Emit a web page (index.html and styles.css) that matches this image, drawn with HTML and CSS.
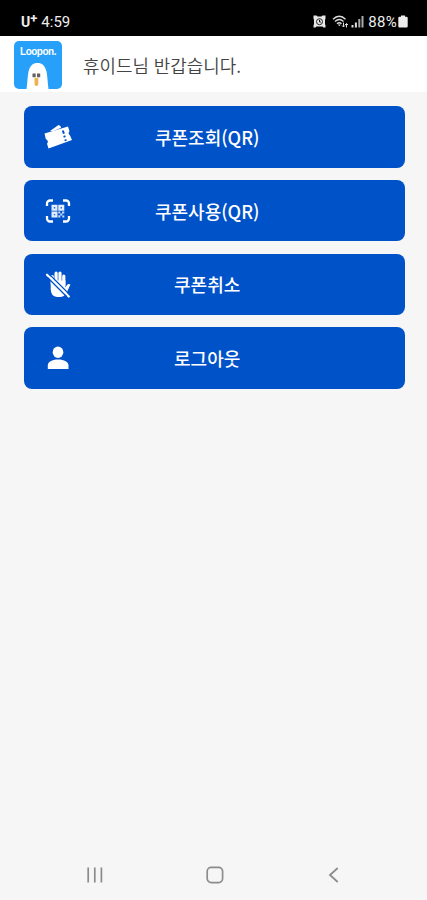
FILE: index.html
```html
<!DOCTYPE html>
<html lang="ko">
  <head>
    <meta charset="UTF-8" />
    <meta name="viewport" content="width=device-width, initial-scale=1.0" />
    <title>Loopon</title>
    <link rel="stylesheet" href="styles.css">
  </head>

  <body>
    <div class="status-bar">
      <div class="status-left">
        <span class="carrier">U<sup>+</sup></span>
        <span class="time">4:59</span>
      </div>
      <div class="status-right">
        <svg class="alarm" width="13" height="13" viewBox="0 0 13 13">
          <path d="M0.500 0.500h3l1 1h4l1-1h3v3l-0.500 1.500v4l0.500 1.500v2h-2l-1-1h-6l-1 1h-2v-2l0.500-1.500v-4l-0.500-1.500z" fill="#e8e8e8" />
          <circle cx="6.500" cy="6.700" r="3" fill="none" stroke="#222" stroke-width="1" />
          <path d="M6.500 4.800v2.200h1.500" fill="none" stroke="#111" stroke-width="1" />
        </svg>
        <svg class="wifi" width="17" height="13" viewBox="0 0 17 13">
          <path d="M1 4.300c4-4 8.500-4 12.500 0M3 6.500c2.800-2.600 5.700-2.600 8.500 0M5 8.700c1.500-1.300 3-1.300 4.500 0" fill="none" stroke="#ddd" stroke-width="1.400" />
          <path d="M5.800 9.500h3l-1.500 1.800z" fill="#ddd" />
          <path d="M11.500 7.500v4.500M10 10.500l1.500 1.500 1.300-1.500M14.500 12.500v-4M13 10l1.500-1.500 1.500 1.500" fill="none" stroke="#ddd" stroke-width="1" />
        </svg>
        <svg class="signal" width="13" height="13" viewBox="0 0 13 13">
          <path d="M0.500 10h2v2.500h-2zM3.900 7.500h2v5h-2z" fill="#ddd" />
          <path d="M7.300 4h2v8.500h-2zM10.500 1h2v11.500h-2z" fill="#aaa" />
        </svg>
        <span class="percent">88%</span>
        <svg class="battery" width="10" height="13" viewBox="0 0 10 13">
          <path d="M3 0.500h4v1.300h1.500a1.200 1.200 0 0 1 1.200 1.200v8.300a1.200 1.200 0 0 1-1.200 1.200h-7a1.200 1.200 0 0 1-1.200-1.200v-8.300a1.200 1.200 0 0 1 1.200-1.200h1.500z" fill="#eee" />
        </svg>
      </div>
    </div>

    <header class="header">
      <div class="logo">
        <span class="logo-name">Loopon.</span>
        <svg class="logo-bird" width="24" height="27" viewBox="0 0 24 27">
          <path d="M0.500 27C1.500 20 1.500 14 2.500 9.500C4 3.500 7 1 11.500 1S19 3.500 20.500 9.500C21.500 14 21.500 20 22.500 27z" fill="#fff" />
          <path d="M6.500 11.500h3.200v3.800h-3.200zM11 11.500h3.200v3.800h-3.200z" fill="#66605e" />
          <path d="M8.500 16h3.800v6q0 2-1.900 2t-1.900-2z" fill="#efb24e" />
        </svg>
      </div>
      <p class="greeting">휴이드님 반갑습니다.</p>
    </header>

    <main class="menu">
      <button class="menu-btn">
        <svg class="menu-icon" width="28" height="28" viewBox="0 0 28 28">
          <path d="M6 8L14.500 2Q16.500 2 17.200 4.800L9 8.300z" fill="#fff" />
          <path d="M0.500 10.500L24 3.500L25.500 8.300Q23.500 10.300 26 12.500L28 17L4.500 25.500L3 20.800Q5.200 18.200 1.800 16z" fill="#fff" />
          <path d="M18.800 7.500l1.100 3.300M20.200 12.600l0.600 1.700M21.300 16.400l0.500 1.600" fill="none" stroke="#0052c9" stroke-width="2" />
        </svg>
        <span class="menu-label">쿠폰조회(QR)</span>
      </button>

      <button class="menu-btn">
        <svg class="menu-icon" width="28" height="28" viewBox="0 0 28 28">
          <path d="M3 9V6.500a3 3 0 0 1 3-3h3M19 3.500h3a3 3 0 0 1 3 3V9M25 19v2.500a3 3 0 0 1-3 3h-3M9 24.500H6a3 3 0 0 1-3-3V19" fill="none" stroke="#fff" stroke-width="2.300" />
          <path d="M7.500 7.800h6v6h-6zM14.300 7.800h6v6h-6zM7.500 14.600h6v6h-6z" fill="#e3ecff" />
          <path d="M14.300 14.600h2v2h-2zM18 14.600h2.300v2h-2.300zM16.300 16.600h2v2h-2zM14.300 18.300h2v2.300h-2zM18.300 18.500h2v2h-2z" fill="#c9dcfc" />
          <path d="M9.800 10.100h1.400v1.400h-1.400zM16.600 10.100h1.400v1.400h-1.400zM9.800 16.900h1.400v1.400h-1.400z" fill="#2969d2" />
        </svg>
        <span class="menu-label">쿠폰사용(QR)</span>
      </button>

      <button class="menu-btn">
        <svg class="menu-icon" width="28" height="28" viewBox="0 0 28 28">
          <path d="M8.300 14V6.500M12.100 14V3.200M16 14V3.200M19.800 15V6" fill="none" stroke="#fff" stroke-width="3.200" stroke-linecap="round" />
          <path d="M6.700 10.500h14.700v7l1.600-2.500q1.500-1.800 3.400-0.500L22.800 22.500Q20 27 16 27H13Q6.700 26 6.700 19z" fill="#fff" />
          <path d="M5.500 4.500L26.500 25.500" stroke="#0052c9" stroke-width="1.300" />
          <path d="M3 4.700L24.800 26.500" stroke="#fff" stroke-width="2.200" stroke-linecap="round" />
          <path d="M3.500 7.500L22.500 26.500" stroke="#0052c9" stroke-width="1.300" />
        </svg>
        <span class="menu-label">쿠폰취소</span>
      </button>

      <button class="menu-btn">
        <svg class="menu-icon" width="28" height="28" viewBox="0 0 28 28">
          <ellipse cx="14" cy="8.300" rx="5.300" ry="5.700" fill="#fff" />
          <path d="M3.800 25v-3.500c0-3.500 4-6 10.200-6s10.500 2.500 10.500 6V25z" fill="#fff" />
        </svg>
        <span class="menu-label">로그아웃</span>
      </button>
    </main>

    <nav class="nav-bar">
      <svg width="18" height="18" viewBox="0 0 18 18">
        <path d="M2.200 1.500v15M8.800 1.500v15M15.400 1.500v15" stroke="#8c8c8c" stroke-width="1.700" />
      </svg>
      <svg width="18" height="18" viewBox="0 0 18 18">
        <rect x="1.200" y="1.400" width="15.400" height="15.200" rx="4" fill="none" stroke="#8c8c8c" stroke-width="1.700" />
      </svg>
      <svg width="18" height="18" viewBox="0 0 18 18">
        <path d="M12.700 2L5 9l7.700 7" fill="none" stroke="#8c8c8c" stroke-width="1.800" />
      </svg>
    </nav>
  </body>
</html>
```

FILE: styles.css
```css
* {
  box-sizing: border-box;
}

body {
  margin: 0;
  height: 100vh;
  display: flex;
  flex-direction: column;
  background-color: #f6f6f6;
  font-family: "Noto Sans CJK KR", sans-serif;
}

.status-bar {
  height: 36px;
  padding: 7px 19px 0 21px;
  display: flex;
  justify-content: space-between;
  align-items: center;
  background-color: #000000;
  color: #eeeeee;
  font-family: Roboto, sans-serif;
  font-size: 15px;
}

.status-left,
.status-right {
  display: flex;
  align-items: center;
}

.carrier {
  font-size: 14px;
  font-weight: bold;
  line-height: 16px;
}

.carrier sup {
  font-size: 13px;
  line-height: 0;
  vertical-align: 4px;
}

.time {
  margin-left: 4px;
}

.wifi {
  margin-left: 6px;
}

.signal {
  margin-left: 2px;
}

.percent {
  margin-left: 4px;
  letter-spacing: 0.3px;
}

.battery {
  margin-left: 1px;
}

.header {
  height: 56px;
  padding: 1px 14px 0;
  display: flex;
  align-items: center;
  background-color: #ffffff;
}

.logo {
  width: 48px;
  height: 48px;
  display: flex;
  flex-direction: column;
  align-items: center;
  justify-content: space-between;
  padding-top: 5px;
  border-radius: 5px;
  background-color: #26a0f8;
}

.logo-name {
  color: #ffffff;
  font-family: "Liberation Sans", sans-serif;
  font-size: 10px;
  font-weight: bold;
  line-height: 12px;
  letter-spacing: -0.5px;
}

.logo-bird {
  display: block;
}

.greeting {
  margin: 0 0 0 21px;
  color: #444444;
  font-size: 17.9px;
  font-weight: 350;
}

.menu {
  flex: 1;
  display: flex;
  flex-direction: column;
  gap: 12.3px;
  padding: 14px 22.5px 0 24.4px;
}

.menu-btn {
  height: 61.5px;
  padding: 0 62px 0 19.5px;
  display: flex;
  align-items: center;
  border: none;
  border-radius: 8px;
  background-color: #0052c9;
  color: #ffffff;
  font-family: inherit;
  cursor: pointer;
}

.menu-label {
  flex: 1;
  text-align: center;
  font-size: 18px;
  font-weight: 500;
}

.nav-bar {
  height: 50px;
  padding: 0 84px 0 86px;
  display: flex;
  justify-content: space-between;
  align-items: center;
}
```
